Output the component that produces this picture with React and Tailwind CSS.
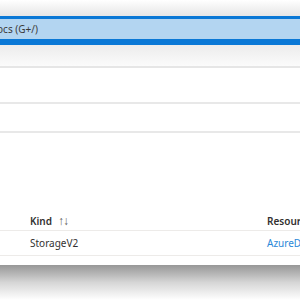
export default function App() {
  const font = { fontFamily: '"Noto Sans", "Open Sans", sans-serif' };
  return (
    <div className="w-[300px] h-[300px] overflow-hidden bg-white flex flex-col" style={font}>
      <div className="h-[16px] shrink-0 bg-gradient-to-b from-white to-[#e6e6e6]" />
      <div className="h-[29px] shrink-0 border-t-[3px] border-b-[6px] border-[#0a78d6] bg-[#b3d5f1] flex items-center">
        <div className="w-[38px] shrink-0 flex justify-end whitespace-nowrap text-[10px] text-[#3b3a39] leading-none">
          <span>Search resources, services, and docs (G+/)</span>
        </div>
      </div>
      <div className="h-[21px] shrink-0 bg-gradient-to-b from-[#ececec] to-[#fbfbfb]" />
      <div className="h-[2px] shrink-0 bg-[#e6e6e6]" />
      <div className="h-[34px] shrink-0" />
      <div className="h-[2px] shrink-0 bg-[#e8e8e8]" />
      <div className="h-[27px] shrink-0" />
      <div className="h-[2px] shrink-0 bg-[#e8e8e8]" />
      <div className="h-[78px] shrink-0" />
      <div className="h-[19px] shrink-0 flex items-center text-[10px] font-semibold text-[#323130] leading-none">
        <div className="w-[267px] shrink-0 pl-[30px] flex items-center gap-[6px]">
          <span>Kind</span>
          <span className="text-[#605e5c] font-normal text-[12px] tracking-[-1px]">↑↓</span>
        </div>
        <div className="whitespace-nowrap shrink-0">Resource group</div>
      </div>
      <div className="h-px shrink-0 bg-[#edebe9]" />
      <div className="h-[24px] shrink-0 flex items-center text-[10px] text-[#323130] leading-none">
        <div className="w-[267px] shrink-0 pl-[30px]">StorageV2</div>
        <div className="whitespace-nowrap shrink-0 text-[#2b88d8]">AzureDemo</div>
      </div>
      <div className="h-px shrink-0 bg-[#edebe9]" />
      <div className="h-[9px] shrink-0" />
      <div className="flex-1 bg-gradient-to-b from-[#979797] via-[#d6d6d6] to-white" />
    </div>
  );
}
